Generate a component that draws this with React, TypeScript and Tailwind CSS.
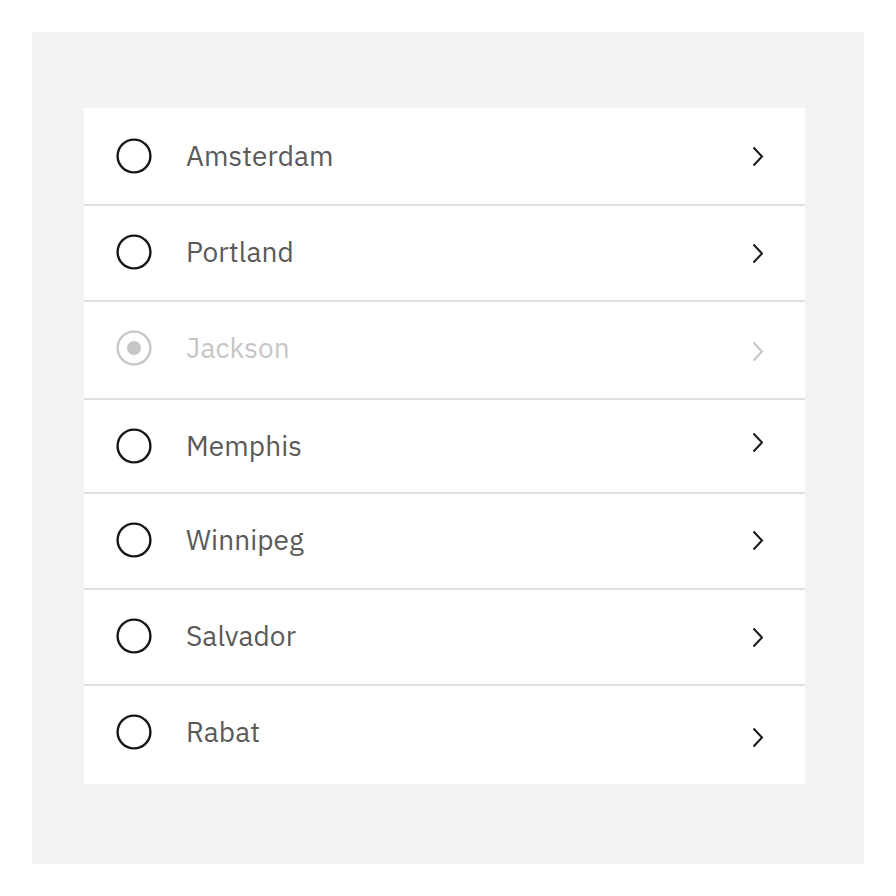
import React from "react";

type Row = {
  label: string;
  h: string;
  textShift: string;
  chevShift: string;
  disabled?: boolean;
  last?: boolean;
};

const rows: Row[] = [
  { label: "Amsterdam", h: "h-[96px]", textShift: "translate-y-[0px]", chevShift: "translate-y-[0px]" },
  { label: "Portland", h: "h-[94px]", textShift: "translate-y-[-1px]", chevShift: "translate-y-[0px]" },
  { label: "Jackson", h: "h-[96px]", textShift: "translate-y-[-2px]", chevShift: "translate-y-[1px]", disabled: true },
  { label: "Memphis", h: "h-[92px]", textShift: "translate-y-[0px]", chevShift: "translate-y-[-4px]" },
  { label: "Winnipeg", h: "h-[94px]", textShift: "translate-y-[-1px]", chevShift: "translate-y-[-1px]" },
  { label: "Salvador", h: "h-[94px]", textShift: "translate-y-[-1px]", chevShift: "translate-y-[0px]" },
  { label: "Rabat", h: "h-[98px]", textShift: "translate-y-[-3px]", chevShift: "translate-y-[2px]", last: true },
];

function Radio({ disabled }: { disabled?: boolean }) {
  const c = disabled ? "#c6c6c6" : "#161616";
  return (
    <svg width="36" height="36" viewBox="0 0 36 36" className="shrink-0">
      <circle cx="18" cy="18" r="16.4" fill="none" stroke={c} strokeWidth="2.4" />
      {disabled && <circle cx="18" cy="18" r="7" fill={c} />}
    </svg>
  );
}

function Chevron({ disabled }: { disabled?: boolean }) {
  const c = disabled ? "#c6c6c6" : "#161616";
  return (
    <svg width="12" height="21" viewBox="0 0 12 21" className="shrink-0">
      <path d="M1.5 1.5 L10 10.5 L1.5 19.5" fill="none" stroke={c} strokeWidth="2" />
    </svg>
  );
}

export default function App() {
  return (
    <div className="w-[896px] h-[896px] bg-white p-[32px]" style={{ fontFamily: '"IBM Plex Sans", Roboto, "Noto Sans", sans-serif' }}>
      <div className="w-[832px] h-[832px] bg-[#f3f3f3] pl-[52px] pt-[76px]">
        <div className="w-[721px] bg-white">
          {rows.map((r) => (
            <div
              key={r.label}
              className={`flex items-center pl-[32px] pr-[41px] ${r.h} ${r.last ? "" : "box-content border-b-2 border-[#e0e0e0]"}`}
            >
              <div className={`flex items-center ${r.textShift}`}>
                <Radio disabled={r.disabled} />
                <span
                  className={`ml-[34px] text-[28px] tracking-[0.1px] ${r.disabled ? "text-[#c6c6c6]" : "text-[#5a5a5a]"}`}
                >
                  {r.label}
                </span>
              </div>
              <div className="flex-1" />
              <div className={r.chevShift}>
                <Chevron disabled={r.disabled} />
              </div>
            </div>
          ))}
        </div>
      </div>
    </div>
  );
}
